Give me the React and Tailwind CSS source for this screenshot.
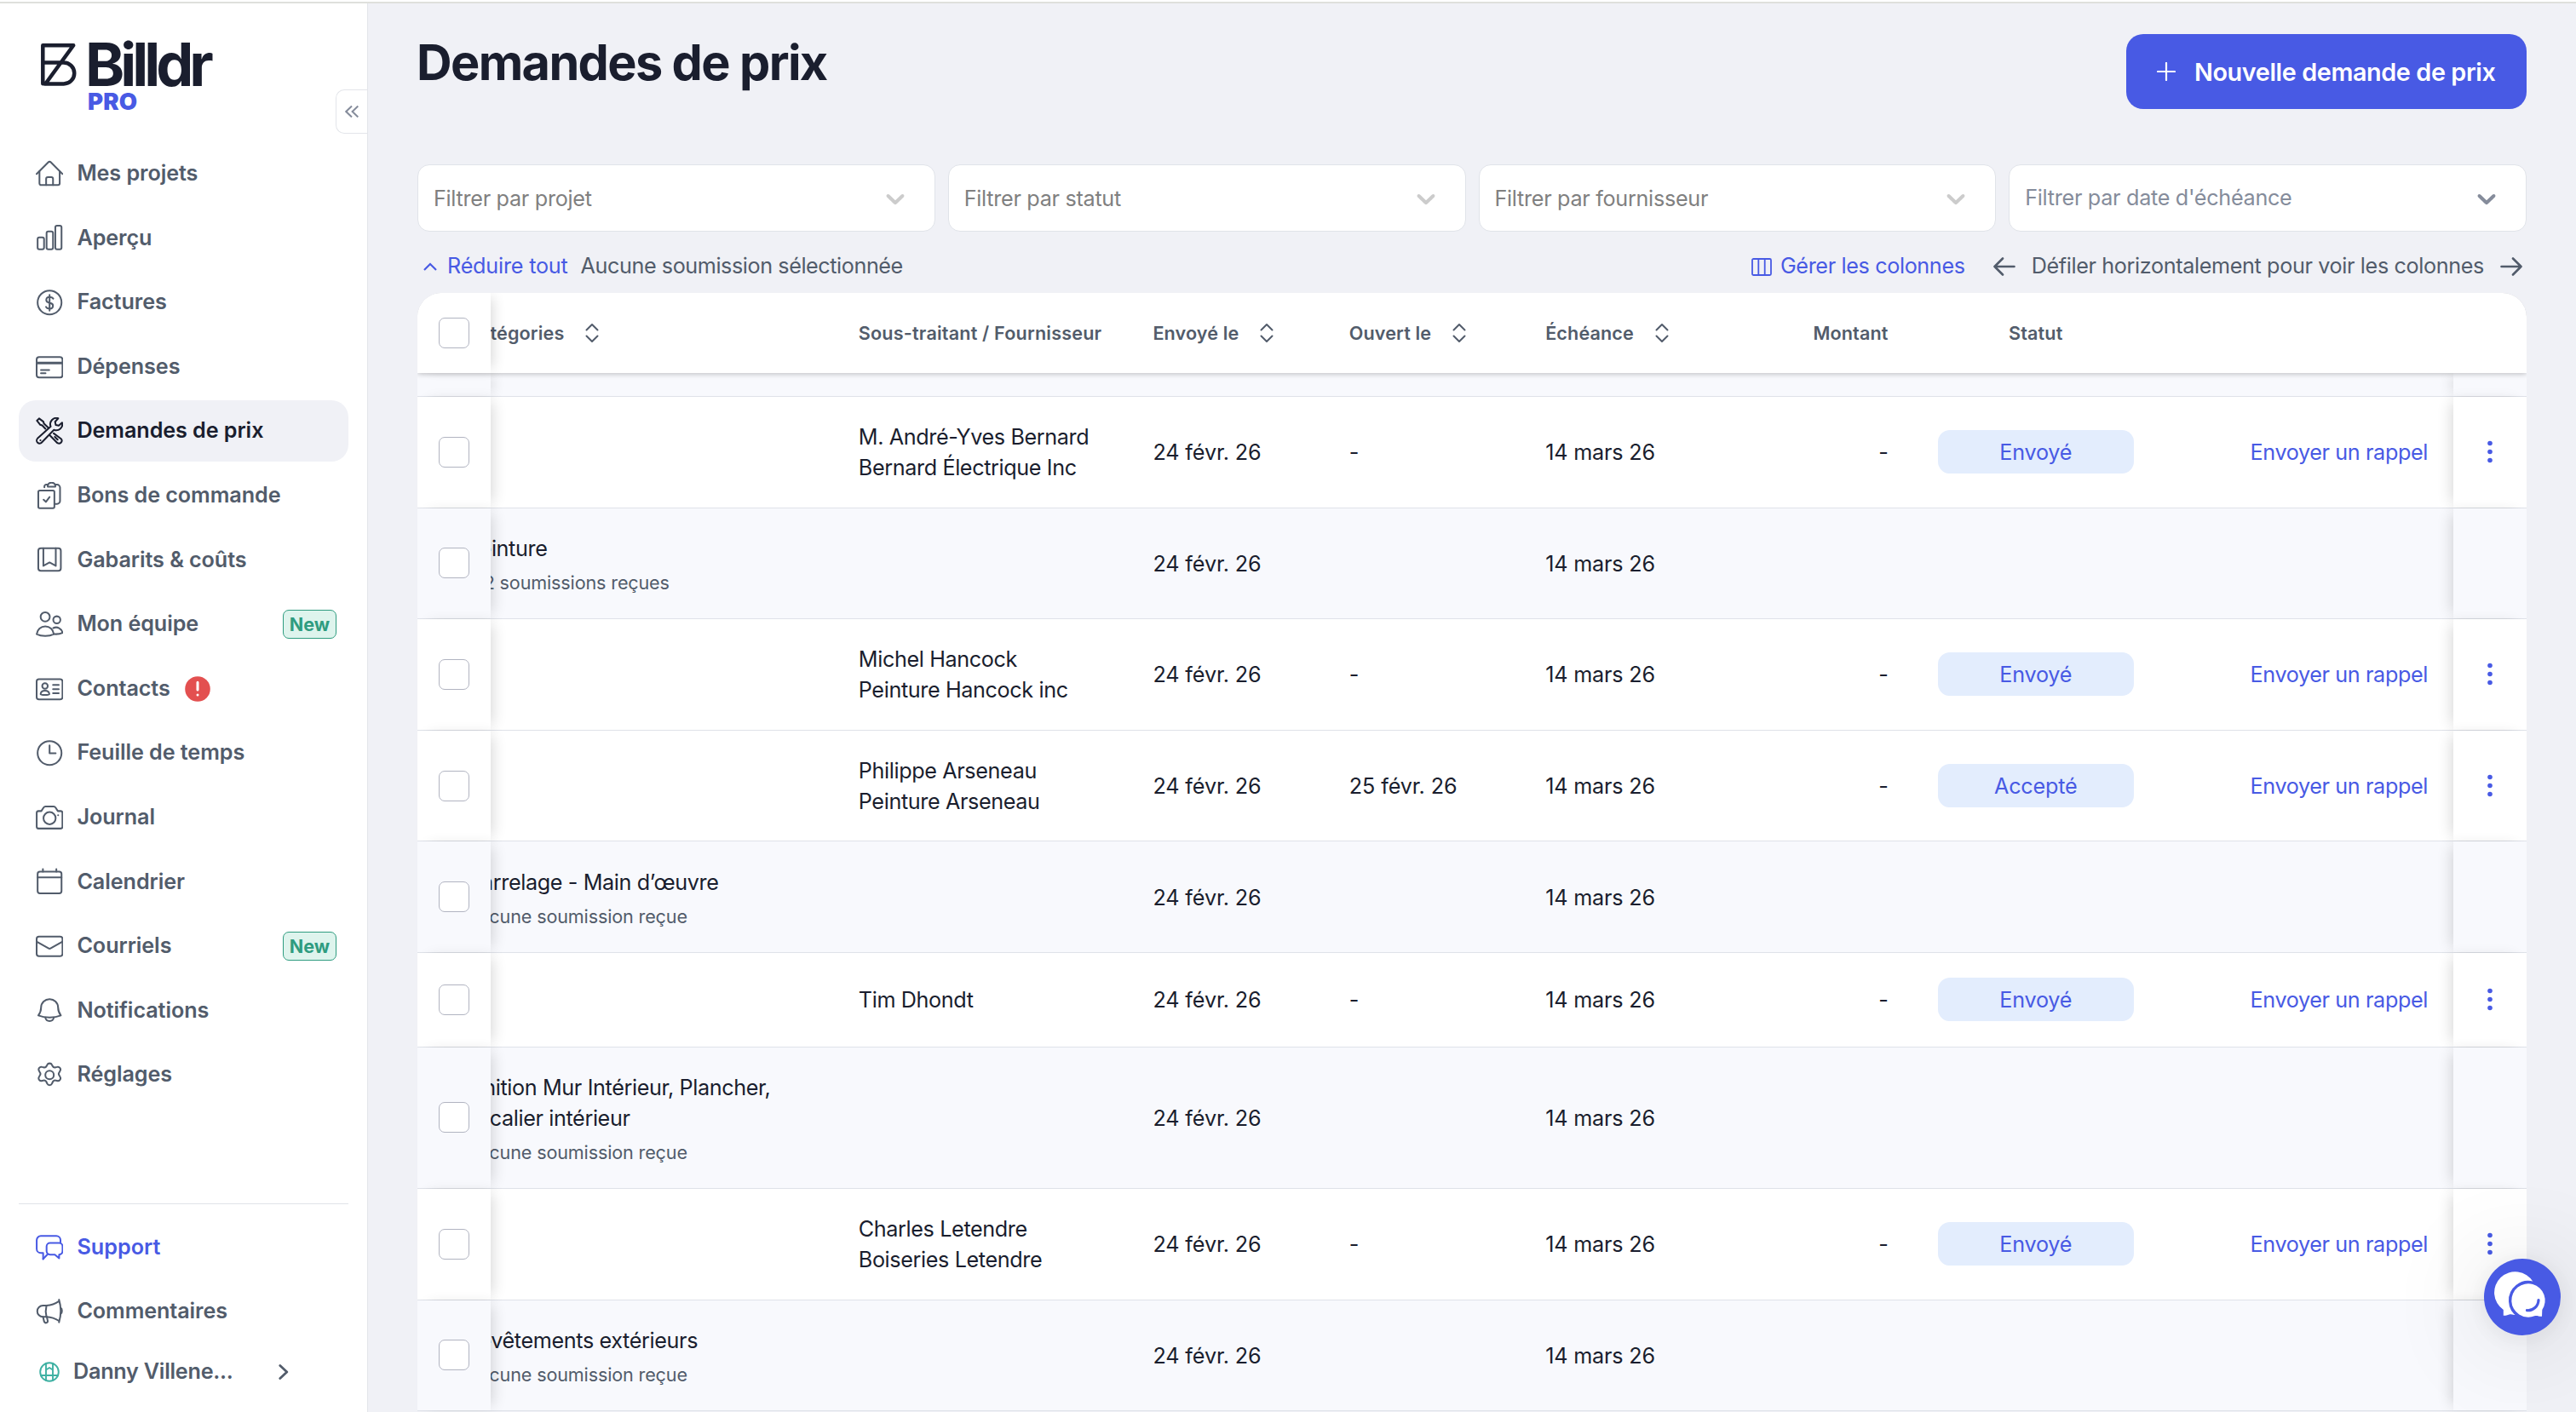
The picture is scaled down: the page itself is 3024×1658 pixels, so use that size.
import React from 'react';

const Icon = ({ children, className = 'w-[32.4px] h-[32.4px]', strokeWidth = 1.5 }) => (
  <svg
    viewBox="0 0 24 24"
    fill="none"
    stroke="currentColor"
    strokeWidth={strokeWidth}
    strokeLinecap="round"
    strokeLinejoin="round"
    className={`shrink-0 ${className}`}
  >
    {children}
  </svg>
);

const icons = {
  home: (
    <>
      <path d="M.75 12 10.9 1.85a1.55 1.55 0 0 1 2.2 0L23.25 12" />
      <path d="M3.2 9.75v10.5a1.5 1.5 0 0 0 1.5 1.5h14.6a1.5 1.5 0 0 0 1.5-1.5V9.75" />
      <path d="M9 21.75v-5.5a1.5 1.5 0 0 1 1.5-1.5h3a1.5 1.5 0 0 1 1.5 1.5v5.5" />
    </>
  ),
  chart: (
    <>
      <rect x="1.6" y="11.6" width="5.6" height="10.4" rx="1.5" />
      <rect x="9.4" y="6.4" width="5.6" height="15.6" rx="1.5" />
      <rect x="17" y="1.4" width="5.4" height="20.6" rx="1.5" />
    </>
  ),
  dollar: (
    <>
      <circle cx="12" cy="12" r="10.4" />
      <path d="M15.2 8.6A3.2 2.4 0 0 0 12.4 7.2h-.9a2.4 2.4 0 0 0-.9 4.6l2.9 1a2.4 2.4 0 0 1-.9 4.600h-.9a3.200 2.400 0 0 1-2.800-1.600M12 5.400v1.800M12 17.400v1.600M12 7.200v10" />
    </>
  ),
  card: (
    <>
      <rect x=".75" y="3.2" width="22.5" height="17.8" rx="2.2" />
      <path d="M.75 8.3h22.5" strokeWidth="2.2" />
      <path d="M4.5 14.5h7.2M4.5 17.2h4" />
    </>
  ),
  tools: (
    <>
      <path d="M15.600 14 22.200 18.900a2.500 2.500 0 0 1-3.400 3.500L12.300 15.700M16.600 17l2.400 2.400" />
      <path d="M8.400 10 5.600 7 3.900 6.500 1 2.900 2.900 1l3.700 2.800.6 1.800 3.900 3.700" />
      <path d="M22.900 4.600a5.300 5.300 0 0 1-7.100 6.300L5.200 21.900a2.500 2.500 0 0 1-3.700-3.500L13 8a5.300 5.300 0 0 1 6.500-7.100L16.800 3.900l.6 2.700 2.600.6z" />
      <path d="M4 20h.1" />
    </>
  ),
  clipboard: (
    <>
      <rect x="2.200" y="7.400" width="14" height="15.400" rx="1.300" />
      <path d="M6.800 15.400l2 1.900 3.200-4.200" />
      <path d="M7.500 4.600V3.900a1.600 1.600 0 0 1 1.600-1.600h1.200M17 2.300h1.500a2.600 2.600 0 0 1 2.600 2.600v11.500a2.600 2.600 0 0 1-2.600 2.600h-2" />
      <path d="M10.400 2.800a3.500 3.500 0 0 1 6.600 0v1.300h-6.600z" />
    </>
  ),
  template: (
    <>
      <rect x="2.200" y="2" width="19.600" height="19.600" rx="2.200" />
      <path d="M6.600 2v15.400l5.400-3 5.400 3V2" />
    </>
  ),
  team: (
    <>
      <circle cx="8.200" cy="5.400" r="4" />
      <circle cx="18.300" cy="8" r="3.100" />
      <path d="M.8 20.400a7.500 7.600 0 0 1 14.900 0c-4 2.200-10.900 2.200-14.900 0z" />
      <path d="M15.200 15.200a5.500 5.500 0 0 1 8 4.200c-2 .9-4.700 1.200-7.200 1" />
    </>
  ),
  contact: (
    <>
      <rect x=".75" y="3.300" width="22.500" height="17.600" rx="2" />
      <circle cx="8" cy="9.200" r="2.400" />
      <path d="M4.200 16.400c.4-4 7.200-4 7.600 0-.1.9-7.500.9-7.600 0zM15 8.300h5M15 12h5M15 15.600h5" />
    </>
  ),
  clock: (
    <>
      <circle cx="12" cy="12" r="10.400" />
      <path d="M12 5.300v7h5.300" />
    </>
  ),
  camera: (
    <>
      <path d="M2.300 6.200h2.500l2-3.100a2 2 0 0 1 1.700-.9h7a2 2 0 0 1 1.700.9l2 3.100h2.500a1.600 1.600 0 0 1 1.500 1.600v12a1.600 1.600 0 0 1-1.500 1.600H2.300a1.600 1.600 0 0 1-1.500-1.600v-12a1.600 1.600 0 0 1 1.500-1.600z" />
      <circle cx="12" cy="12.400" r="5.300" />
      <path d="M19.400 9.900h.1" />
    </>
  ),
  calendar: (
    <>
      <rect x="1.600" y="3.400" width="20.800" height="18.800" rx="2" />
      <path d="M1.600 8.400h20.800M6.200 1.200v2.200M17.900 1.200v2.200" />
    </>
  ),
  mail: (
    <>
      <rect x=".75" y="3.600" width="22.500" height="17" rx="2" />
      <path d="m1 8 9.900 5.700a2.200 2.200 0 0 0 2.200 0L23 8" />
    </>
  ),
  bell: (
    <>
      <path d="M12 1.600a7.300 7.300 0 0 1 7.400 7.200c0 3.400 1.200 5.400 2.400 7-5.600 2.300-14 2.300-19.600 0 1.200-1.600 2.400-3.600 2.400-7A7.300 7.300 0 0 1 12 1.600z" />
      <path d="M8.300 17.700a3.800 3.900 0 0 0 7.400 0" />
    </>
  ),
  gear: (
    <>
      <circle cx="12" cy="12" r="3.700" />
      <path d="m9.400 3.200.5-1a2.300 2.300 0 0 1 4.200 0l.5 1a2.200 2.200 0 0 0 2.700 1.100l1.200-.3a2.300 2.300 0 0 1 2.700 3.300l-.7 1.300a2.200 2.200 0 0 0 0 2.800l.7 1.300a2.300 2.300 0 0 1-2.700 3.300l-1.200-.3a2.200 2.200 0 0 0-2.700 1.700l-.5 1a2.300 2.300 0 0 1-4.200 0l-.5-1a2.200 2.200 0 0 0-2.700-1.700l-1.200.3a2.300 2.300 0 0 1-2.700-3.300l.7-1.300a2.200 2.200 0 0 0 0-2.800l-.7-1.300A2.300 2.300 0 0 1 5.500 4l1.200.3a2.200 2.200 0 0 0 2.700-1.100z" transform="translate(0 1.100)" />
    </>
  ),
  support: (
    <>
      <path d="M6.400 21.900V16.500H4.400a3.600 3.600 0 0 1-3.600-3.600V5.300a3.600 3.600 0 0 1 3.600-3.600h13.500a3.600 3.600 0 0 1 3.600 3.600v1.800" />
      <path d="M12.400 7.800h7.900a3 3 0 0 1 3 3v4.100a3 3 0 0 1-3 3v3.200l-3.700-3.200h-4.200a3 3 0 0 1-3-3v-4.100a3 3 0 0 1 3-3zM10.300 17.600l-3.900 4.100" />
    </>
  ),
  megaphone: (
    <>
      <path d="M9.300 6.700H6.200a4.900 4.900 0 0 0 0 9.800h3.100c-.8-3.200-.8-6.600 0-9.800z" />
      <path d="M9.300 6.700a22 22 0 0 0 10.900-3.800M9.300 16.500a22 22 0 0 1 10.900 3.500M20.200 1.600c2 6.500 2 13 0 19.600M21.800 8.800c1.300.8 1.300 4.200 0 5" />
      <path d="M6.300 16.500l1 4.200a1.600 1.600 0 0 0 3.100-.6l-.8-3.600" />
    </>
  ),
};

const navItems = [
  { label: 'Mes projets', icon: 'home' },
  { label: 'Aperçu', icon: 'chart' },
  { label: 'Factures', icon: 'dollar' },
  { label: 'Dépenses', icon: 'card' },
  { label: 'Demandes de prix', icon: 'tools', active: true },
  { label: 'Bons de commande', icon: 'clipboard' },
  { label: 'Gabarits & coûts', icon: 'template' },
  { label: 'Mon équipe', icon: 'team', isNew: true },
  { label: 'Contacts', icon: 'contact', alert: true },
  { label: 'Feuille de temps', icon: 'clock' },
  { label: 'Journal', icon: 'camera' },
  { label: 'Calendrier', icon: 'calendar' },
  { label: 'Courriels', icon: 'mail', isNew: true },
  { label: 'Notifications', icon: 'bell' },
  { label: 'Réglages', icon: 'gear' },
];

const rows = [
  { supplier: ['M. André-Yves Bernard', 'Bernard Électrique Inc'], opened: '-', status: 'Envoyé' },
  { category: ['Peinture'], note: '2/2 soumissions reçues' },
  { supplier: ['Michel Hancock', 'Peinture Hancock inc'], opened: '-', status: 'Envoyé' },
  { supplier: ['Philippe Arseneau', 'Peinture Arseneau'], opened: '25 févr. 26', status: 'Accepté' },
  { category: ['Carrelage - Main d’œuvre'], note: 'Aucune soumission reçue' },
  { supplier: ['Tim Dhondt'], opened: '-', status: 'Envoyé', height: 'h-[111px]' },
  {
    category: ['Finition Mur Intérieur, Plancher,', 'Escalier intérieur'],
    note: 'Aucune soumission reçue',
    height: 'h-[166px]',
  },
  { supplier: ['Charles Letendre', 'Boiseries Letendre'], opened: '-', status: 'Envoyé' },
  { category: ['Revêtements extérieurs'], note: 'Aucune soumission reçue' },
];

const Logo = () => (
  <div className="flex h-[84px] pl-12 text-[#1a1e2e]">
    <svg viewBox="0 0 43 50" fill="none" stroke="currentColor" strokeWidth="4.5" strokeLinejoin="round" className="w-[43px] h-[50px] mt-px">
      <path d="M2.3 2.3h35.900L5.500 47.300H2.300zM2.300 22.500h24.500a12.300 12.300 0 0 1 0 24.900H4" />
    </svg>
    <div className="ml-[9px]">
      <div className="text-[70px] leading-[51px] font-bold tracking-[-5px]">Billdr</div>
      <div className="mt-[4px] ml-[3px] text-[27.5px] leading-[28px] font-black tracking-[0.2px] text-[#485ae4]">PRO</div>
    </div>
  </div>
);

const NewBadge = () => (
  <span className="ml-auto mr-[14px] flex h-[34px] w-[63px] items-center justify-center rounded-[7px] border border-[#2f9c80] bg-[#def4ed] text-[21.6px] font-bold text-[#2f9c80]">
    New
  </span>
);

const NavItem = ({ item }) => (
  <div
    className={`flex h-[72px] items-center rounded-[20px] pl-[20px] ${
      item.active ? 'bg-[#f0f1f6] text-[#1a1e2e]' : 'text-[#525c6b]'
    }`}
  >
    <Icon>{icons[item.icon]}</Icon>
    <span className="ml-[16px] text-[25.2px] font-semibold tracking-[-0.08px]">{item.label}</span>
    {item.alert && (
      <svg viewBox="0 0 30 30" className="ml-[17px] h-[30px] w-[30px]">
        <circle cx="15" cy="15" r="14.8" fill="#e35050" />
        <path d="M15 7.3v8.7M15 22v.1" stroke="#fff" strokeWidth="3" strokeLinecap="round" />
      </svg>
    )}
    {item.isNew && <NewBadge />}
  </div>
);

const Sidebar = () => (
  <aside className="flex w-[432px] shrink-0 flex-col border-r border-[#e3e5ea] bg-white pt-[46px]">
    <Logo />
    <div className="-mt-[29px] flex h-[52px] w-[37px] items-center justify-center self-end rounded-l-[10px] border border-r-0 border-[#e3e5ea] text-[#858c9b]">
      <svg viewBox="0 0 16 14" fill="none" stroke="currentColor" strokeWidth="2" className="h-[14px] w-[16px]">
        <path d="M8 .5 1.3 7 8 13.5M15.3.5 8.600 7l6.700 6.500" />
      </svg>
    </div>
    <nav className="mt-[11px] flex flex-col gap-[3.6px] pl-[22px] pr-[22px]">
      {navItems.map((item) => (
        <NavItem key={item.label} item={item} />
      ))}
    </nav>
    <div className="mx-[22px] mt-auto border-t border-[#e0e3e9] pt-[15px] pb-[12px] text-[25.2px] font-semibold text-[#525c6b]">
      <div className="flex h-[72px] items-center pl-[20px] text-[#485ae4]">
        <Icon>{icons.support}</Icon>
        <span className="ml-[16px]">Support</span>
      </div>
      <div className="mt-[3px] flex h-[72px] items-center pl-[20px]">
        <Icon>{icons.megaphone}</Icon>
        <span className="ml-[16px] tracking-[-0.1px]">Commentaires</span>
      </div>
      <div className="flex h-[70px] items-center pl-[24px]">
        <Icon className="h-[24px] w-[24px] text-[#3fb1a3]" strokeWidth={1.9}>
          <circle cx="12" cy="12" r="10.8" />
          <path d="M8 2v20M16 2v20M8 9.500 12 7l4 2.500M2 16h20" />
        </Icon>
        <span className="ml-[16px] tracking-[-0.25px]">Danny Villene...</span>
        <svg viewBox="0 0 12 18" fill="none" stroke="currentColor" strokeWidth="2.8" strokeLinecap="round" strokeLinejoin="round" className="ml-[53px] h-[18px] w-[12px]">
          <path d="m1.800 1.500 8 7.500-8 7.500" />
        </svg>
      </div>
    </div>
  </aside>
);

const Filter = ({ label, date }) => (
  <div className="flex h-[79px] flex-1 items-center justify-between rounded-[14px] border border-[#e0e3e9] bg-white pl-[18px] pr-[28px]">
    <span className={`text-[25.2px] tracking-[-0.3px] ${date ? 'text-[#858c9b]' : 'pt-[2px] text-[#808080]'}`}>{label}</span>
    <svg viewBox="0 0 20 20" fill="currentColor" className={`h-[36px] w-[36px] ${date ? 'text-[#858c9b]' : 'text-[#cccccc]'}`}>
      <path d="M4.516 7.548c0.436-0.446 1.043-0.481 1.576 0l3.908 3.747 3.908-3.747c0.533-0.481 1.141-0.446 1.574 0 0.436 0.445 0.408 1.197 0 1.615-0.406 0.418-4.695 4.502-4.695 4.502-0.217 0.223-0.502 0.335-0.787 0.335s-0.570-0.112-0.789-0.335c0 0-4.287-4.084-4.695-4.502s-0.436-1.170 0-1.615z" />
    </svg>
  </div>
);

const Arrow = ({ flip }) => (
  <svg viewBox="0 0 26 22" fill="none" stroke="currentColor" strokeWidth="2.6" strokeLinecap="round" strokeLinejoin="round" className={`h-[22px] w-[26px] ${flip ? 'rotate-180' : ''}`}>
    <path d="M24.500 11h-23M11 1.500 1.500 11l9.500 9.500" />
  </svg>
);

const Toolbar = () => (
  <div className="mt-[23px] flex h-[36px] items-center text-[25.2px] tracking-[-0.37px] text-[#525c6b]">
    <div className="flex items-center text-[#485ae4]">
      <svg viewBox="0 0 16 10" fill="none" stroke="currentColor" strokeWidth="2.2" className="ml-[7px] h-[10px] w-[16px]">
        <path d="M1 9l7-7 7 7" />
      </svg>
      <span className="ml-[12px] tracking-[-0.2px]">Réduire tout</span>
    </div>
    <span className="ml-[15px] tracking-[-0.43px]">Aucune soumission sélectionnée</span>
    <div className="ml-auto flex items-center text-[#485ae4]">
      <svg viewBox="0 0 24 21" fill="none" stroke="currentColor" strokeWidth="1.8" className="h-[21px] w-[24px]">
        <rect x="1" y="1" width="22" height="19" rx="1.5" />
        <path d="M8.300 1v19M15.700 1v19" />
      </svg>
      <span className="ml-[10px]">Gérer les colonnes</span>
    </div>
    <div className="ml-[33px] mr-[5px] flex items-center gap-[19px]">
      <Arrow />
      <span>Défiler horizontalement pour voir les colonnes</span>
      <Arrow flip />
    </div>
  </div>
);

const Sort = () => (
  <svg viewBox="0 0 16 24" fill="none" stroke="currentColor" strokeWidth="2" strokeLinecap="round" strokeLinejoin="round" className="ml-[25px] h-[24px] w-[16px]">
    <path d="M1.500 8.500 8 2l6.500 6.500M1.500 15.500 8 22l6.500-6.500" />
  </svg>
);

const Checkbox = () => <span className="h-[36px] w-[36px] rounded-[7px] border border-[#b1b4c1] bg-white" />;

const LeftCell = ({ className = '', children }) => (
  <div className={`relative z-10 flex w-[86px] shrink-0 items-center justify-center self-stretch shadow-[8px_0_16px_-6px_rgba(0,0,0,0.16)] ${className}`}>
    {children}
  </div>
);

const RightCell = ({ className = '', children }) => (
  <div className={`relative z-10 ml-auto flex w-[86px] shrink-0 items-center justify-center self-stretch shadow-[-8px_0_16px_-6px_rgba(0,0,0,0.16)] ${className}`}>
    {children}
  </div>
);

const TableHeader = () => (
  <div className="relative z-20 flex h-[94px] shrink-0 items-center rounded-t-[28px] bg-white text-[21.6px] font-semibold tracking-[0.12px] text-[#525c6b] shadow-[0_1px_6px_rgba(0,0,0,0.25)]">
    <LeftCell className="rounded-tl-[28px] bg-white">
      <Checkbox />
    </LeftCell>
    <div className="-ml-[29px] flex w-[460.8px] shrink-0 items-center">
      Catégories
      <Sort />
    </div>
    <div className="w-[345.6px] shrink-0 tracking-[0.18px]">Sous-traitant / Fournisseur</div>
    <div className="flex w-[230.4px] shrink-0 items-center">
      Envoyé le
      <Sort />
    </div>
    <div className="flex w-[230.4px] shrink-0 items-center">
      Ouvert le
      <Sort />
    </div>
    <div className="flex w-[230.4px] shrink-0 items-center">
      Échéance
      <Sort />
    </div>
    <div className="w-[172px] shrink-0 text-right">Montant</div>
    <div className="ml-[58px] w-[230.4px] shrink-0 text-center">Statut</div>
  </div>
);

const Row = ({ row }) => {
  const bg = row.category ? 'bg-[#f8f9fd]' : 'bg-white';
  return (
    <div
      className={`flex shrink-0 items-center border-b border-[#dfe2e9] text-[25.2px] leading-[36px] tracking-[-0.38px] text-[#1a1e2e] ${bg} ${
        row.height || 'h-[130.6px]'
      }`}
    >
      <LeftCell className={bg}>
        <Checkbox />
      </LeftCell>
      <div className="-ml-[29px] w-[460.8px] shrink-0 pt-px">
        {row.category && (
          <>
            {row.category.map((line) => (
              <div key={line} className="whitespace-nowrap">{line}</div>
            ))}
            <div className="mt-[9px] text-[21.6px] leading-[27px] tracking-[-0.15px] text-[#525c6b]">{row.note}</div>
          </>
        )}
      </div>
      <div className="w-[345.6px] shrink-0 pt-px">
        {row.supplier && row.supplier.map((line) => <div key={line}>{line}</div>)}
      </div>
      <div className="w-[230.4px] shrink-0 pt-px tracking-[-0.12px]">24 févr. 26</div>
      <div className="w-[230.4px] shrink-0 pt-px tracking-[-0.12px]">{row.opened}</div>
      <div className="w-[230.4px] shrink-0 pt-px tracking-[-0.2px]">14 mars 26</div>
      {row.status && (
        <>
          <div className="w-[172px] shrink-0 text-right">-</div>
          <div className="ml-[58px] flex h-[51px] w-[230.4px] shrink-0 items-center justify-center rounded-[14px] bg-[#e3edfd] tracking-[-0.2px] text-[#485ae4]">
            {row.status}
          </div>
          <div className="ml-auto mr-[30px] shrink-0 pt-px text-[#485ae4]">Envoyer un rappel</div>
        </>
      )}
      <RightCell className={row.status ? `ml-0! ${bg}` : bg}>
        {row.status && (
          <svg viewBox="0 0 6 28" className="h-[28px] w-[6px] text-[#485ae4]" fill="currentColor">
            <circle cx="3" cy="3.5" r="2.8" />
            <circle cx="3" cy="13.5" r="2.8" />
            <circle cx="3" cy="23.5" r="2.8" />
          </svg>
        )}
      </RightCell>
    </div>
  );
};

const ChatButton = () => (
  <div className="fixed bottom-[90px] right-[18px] z-30 h-[90px] w-[90px] rounded-full bg-[#485ae4] shadow-[0_8px_120px_rgba(0,0,0,0.16),0_4px_30px_rgba(0,0,0,0.08)]">
    <svg viewBox="0 0 90 90" className="h-[90px] w-[90px]">
      <path d="M22.800 66.800V60A24.500 24.500 0 1 1 57.500 27L50 50 37.500 66c-2.500.3-4-1.200-7-.8-2.600.4-4.600 2-7.700 1.600z" fill="#fff" />
      <path
        d="M68 67.800c-3.600.2-5.600-1.300-8.800-.5A19.700 19.700 0 1 1 68.300 60z"
        fill="#fff"
        stroke="#485ae4"
        strokeWidth="6.6"
        style={{ paintOrder: 'stroke' }}
      />
      <path d="M64 48.500A12.500 12.500 0 0 1 50.500 60.700" fill="none" stroke="#485ae4" strokeWidth="3.2" strokeLinecap="round" />
    </svg>
  </div>
);

const App = () => {
  return (
    <div className="flex h-[1658px] w-[3024px] flex-col overflow-hidden bg-white font-['Inter','Liberation_Sans',sans-serif]">
      <div className="mt-[2px] h-[2px] shrink-0 bg-[#dfe0dc]" />
      <div className="flex min-h-0 flex-1">
        <Sidebar />
        <main className="flex min-w-0 flex-1 flex-col bg-[#f0f1f6] px-[58px] pt-[36px]">
          <div className="flex h-[88px] shrink-0 items-start justify-between">
            <h1 className="-mt-[3px] -ml-px text-[57.6px] leading-[72px] font-bold tracking-[-1.63px] text-[#1a1e2e]">
              Demandes de prix
            </h1>
            <button className="flex h-[88px] w-[470px] items-center rounded-[20px] bg-[#485ae4] pl-[36px] text-[28.8px] font-semibold tracking-[-0.4px] text-white">
              <svg viewBox="0 0 22 22" stroke="currentColor" strokeWidth="2.2" strokeLinecap="round" className="h-[22px] w-[22px]">
                <path d="M11 1v20M1 11h20" />
              </svg>
              <span className="ml-[22px] pt-[2px]">Nouvelle demande de prix</span>
            </button>
          </div>
          <div className="mt-[65px] flex shrink-0 gap-[15px]">
            <Filter label="Filtrer par projet" />
            <Filter label="Filtrer par statut" />
            <Filter label="Filtrer par fournisseur" />
            <Filter label="Filtrer par date d'échéance" date />
          </div>
          <Toolbar />
          <div className="mt-[13px] flex min-h-0 flex-1 flex-col overflow-hidden rounded-t-[28px]">
            <TableHeader />
            <div className="flex h-[28px] shrink-0 border-b border-[#dfe2e9] bg-[#f8f9fd]">
              <LeftCell className="bg-[#f8f9fd]" />
              <RightCell className="bg-[#f8f9fd]" />
            </div>
            {rows.map((row, i) => (
              <Row key={i} row={row} />
            ))}
          </div>
        </main>
      </div>
      <ChatButton />
    </div>
  );
};

export default App;
